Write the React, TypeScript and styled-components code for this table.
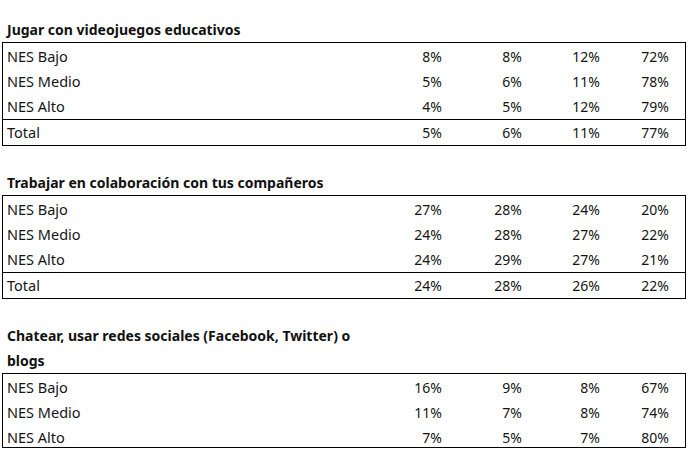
import React from "react";
import styled, { createGlobalStyle } from "styled-components";

const Global = createGlobalStyle`
  html, body { margin: 0; padding: 0; background: #fff; }
  body { font-family: "Noto Sans", "Open Sans", sans-serif; color: #151515; }
`;

const Page = styled.div`
  width: 688px;
  height: 453px;
  overflow: hidden;
  padding: 17px 0 0 2px;
  box-sizing: border-box;
  display: flex;
  flex-direction: column;
  gap: 24px;
`;

const Section = styled.section`
  display: flex;
  flex-direction: column;
`;

const Title = styled.h2`
  margin: 0;
  padding-left: 5px;
  max-width: 370px;
  font-size: 14px;
  font-weight: 700;
  line-height: 25px;
  color: #111;
`;

const Table = styled.div`
  width: 684px;
  box-sizing: border-box;
  border: 1px solid #000;
`;

const Body = styled.div`
  padding-top: 1px;
`;

const Row = styled.div<{ $h?: number; $top?: boolean }>`
  display: grid;
  grid-template-columns: 1fr 80px 80px 78px 69px;
  padding-right: 16px;
  height: ${(p) => p.$h ?? 25}px;
  line-height: 25px;
  font-size: 14px;
  border-top: ${(p) => (p.$top ? "1px solid #000" : "none")};
`;

const Label = styled.span`
  padding-left: 4px;
  font-size: 14.5px;
  white-space: nowrap;
`;

const Num = styled.span`
  text-align: right;
`;

type Data = { label: string; values: string[] };

const tables: { title: string; rows: Data[]; total?: string[]; lastH?: number }[] = [
  {
    title: "Jugar con videojuegos educativos",
    rows: [
      { label: "NES Bajo", values: ["8%", "8%", "12%", "72%"] },
      { label: "NES Medio", values: ["5%", "6%", "11%", "78%"] },
      { label: "NES Alto", values: ["4%", "5%", "12%", "79%"] },
    ],
    total: ["5%", "6%", "11%", "77%"],
  },
  {
    title: "Trabajar en colaboración con tus compañeros",
    rows: [
      { label: "NES Bajo", values: ["27%", "28%", "24%", "20%"] },
      { label: "NES Medio", values: ["24%", "28%", "27%", "22%"] },
      { label: "NES Alto", values: ["24%", "29%", "27%", "21%"] },
    ],
    total: ["24%", "28%", "26%", "22%"],
  },
  {
    title: "Chatear, usar redes sociales (Facebook, Twitter) o blogs",
    rows: [
      { label: "NES Bajo", values: ["16%", "9%", "8%", "67%"] },
      { label: "NES Medio", values: ["11%", "7%", "8%", "74%"] },
      { label: "NES Alto", values: ["7%", "5%", "7%", "80%"] },
    ],
    lastH: 22,
  },
];

export default function App() {
  return (
    <>
      <Global />
      <Page>
        {tables.map((t) => (
          <Section key={t.title}>
            <Title>{t.title}</Title>
            <Table>
              <Body>
                {t.rows.map((r, i) => (
                  <Row key={r.label} $h={i === t.rows.length - 1 && t.lastH ? t.lastH : 25}>
                    <Label>{r.label}</Label>
                    {r.values.map((v, j) => (
                      <Num key={j}>{v}</Num>
                    ))}
                  </Row>
                ))}
              </Body>
              {t.total && (
                <Row $top>
                  <Label>Total</Label>
                  {t.total.map((v, j) => (
                    <Num key={j}>{v}</Num>
                  ))}
                </Row>
              )}
            </Table>
          </Section>
        ))}
      </Page>
    </>
  );
}
